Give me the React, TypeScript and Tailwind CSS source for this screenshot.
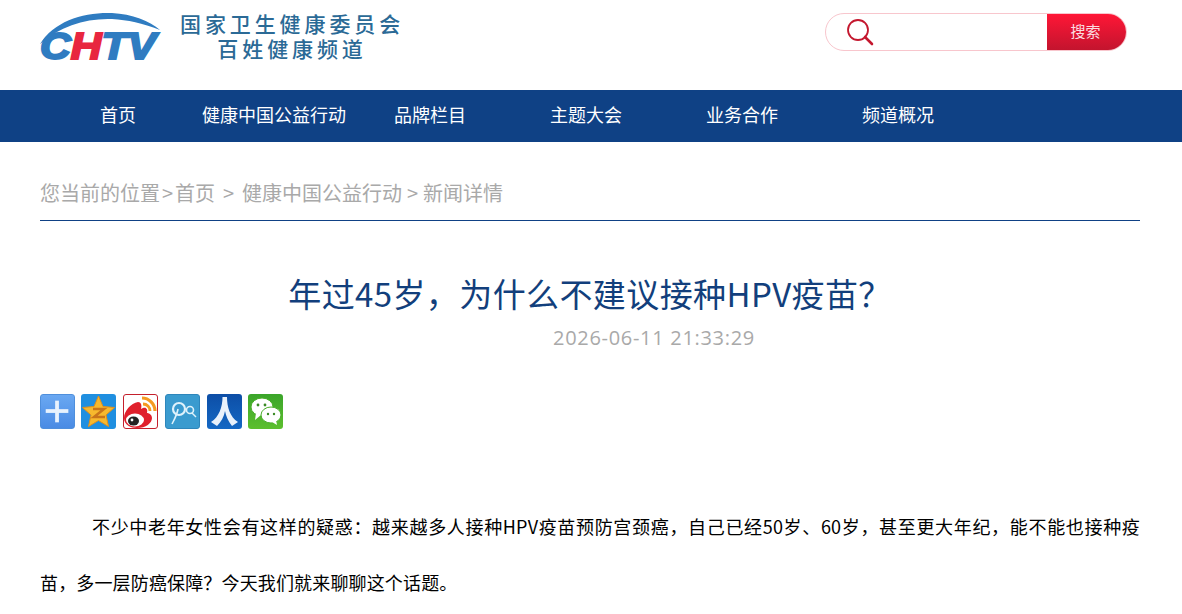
const navItems = ['首页', '健康中国公益行动', '品牌栏目', '主题大会', '业务合作', '频道概况'];

function Logo() {
  return (
    <svg width="124" height="58" viewBox="0 0 124 58" className="shrink-0">
      <path d="M0 33 C14 10 44 1 72 2 C92 3 110 10 120 19 C102 12 88 9 72 8 C46 7 20 15 0 33 Z" fill="#2f7cc1" />
      <text x="0" y="48" fontFamily="'Liberation Sans', sans-serif" fontWeight="700" fontStyle="italic" fontSize="36" textLength="116" lengthAdjust="spacingAndGlyphs" stroke="#2f7cc1" strokeWidth="2" fill="#2f7cc1">
        C<tspan fill="#e8263f" stroke="#e8263f">H</tspan>TV
      </text>
    </svg>
  );
}

function MagnifierIcon() {
  return (
    <svg width="28" height="28" viewBox="0 0 28 28" fill="none" stroke="#c4182f">
      <circle cx="12" cy="12" r="10" strokeWidth="1.8" />
      <path d="M19 19 L26 26" strokeWidth="2.6" strokeLinecap="round" />
    </svg>
  );
}

function ShareIcons() {
  return (
    <div className="mt-[41px] flex">
      <div className="mr-[6px] h-[35px] w-[35px] rounded-[3px] border border-[#4f8fdc] bg-gradient-to-b from-[#6aa8f2] to-[#4a8be4]">
        <svg viewBox="0 0 35 35" className="h-full w-full" fill="#e8f2fd">
          <rect x="5" y="15" width="24" height="4" />
          <rect x="15" y="6" width="4" height="23" />
        </svg>
      </div>
      <div className="mr-[7px] h-[35px] w-[35px] rounded-[3px] bg-[#1f8fe0]">
        <svg viewBox="0 0 35 35" className="h-full w-full">
          <path d="M17.5 2 L22 12.5 L33.5 13.5 L25 21 L27.5 32.5 L17.5 26.5 L7.5 32.5 L10 21 L1.5 13.5 L13 12.5 Z" fill="#f7b92e" stroke="#e0901c" strokeWidth="1" />
          <path d="M12 15 H23 L13 23 H24" fill="none" stroke="#c9741a" strokeWidth="2.5" />
        </svg>
      </div>
      <div className="mr-[7px] h-[35px] w-[35px] rounded-[3px] border border-[#c4202c] bg-white">
        <svg viewBox="0 0 33 33" className="h-full w-full">
          <path d="M14 7 C7 8 0 16 0 23 C0 30 7 33 13 33 C22 33 28 28 28 23 C28 19 24 18 23 18 C24 14 22 11 17 14 C18 10 17 7 14 7 Z" fill="#e0202c" />
          <ellipse cx="11" cy="25" rx="9" ry="6.5" fill="#fff" />
          <ellipse cx="9.5" cy="26" rx="5.5" ry="4.5" fill="#222" />
          <circle cx="8" cy="25" r="1.4" fill="#fff" />
          <path d="M18 3 C25 3 31 9 31 16" fill="none" stroke="#f59a22" strokeWidth="3.2" />
          <path d="M19 9 C23 9 26 12 26 16" fill="none" stroke="#f59a22" strokeWidth="2.8" />
        </svg>
      </div>
      <div className="mr-[7px] h-[35px] w-[35px] rounded-[3px] border border-[#2e86bb] bg-[#3a9bcf]">
        <svg viewBox="0 0 33 33" className="h-full w-full" fill="none" stroke="#dff2fb">
          <circle cx="13" cy="14" r="6" strokeWidth="2.2" />
          <path d="M12 14 C11 20 8 25 6 29" strokeWidth="1.6" />
          <circle cx="24" cy="15" r="3.5" strokeWidth="1.6" />
          <path d="M26 18 L30 22" strokeWidth="1.4" />
        </svg>
      </div>
      <div className="mr-[6px] h-[35px] w-[35px] rounded-[3px] bg-gradient-to-b from-[#0d4ea6] to-[#1468c4]">
        <svg viewBox="0 0 35 35" className="h-full w-full">
          <path d="M15.5 3 H20 C20 13 23 23 31 28 L25 32 C21 27 19 22 18 17 C17 23 14 28 10 32 L4 28 C12 23 15.5 13 15.5 3 Z" fill="#e8f1fb" />
        </svg>
      </div>
      <div className="h-[35px] w-[35px] rounded-[3px] bg-gradient-to-b from-[#3aa52a] to-[#5cbf2e]">
        <svg viewBox="0 0 35 35" className="h-full w-full" fill="#fff">
          <ellipse cx="14" cy="13" rx="11" ry="9" stroke="#4aae2a" />
          <path d="M8 19 L7 26 L13 21 Z" />
          <ellipse cx="23" cy="21" rx="10" ry="8" stroke="#4aae2a" />
          <path d="M28 26 L29 31 L24 28 Z" />
          <circle cx="10" cy="11" r="1.4" fill="#3a8a24" />
          <circle cx="17" cy="11" r="1.4" fill="#3a8a24" />
          <circle cx="20" cy="20" r="1.2" fill="#3a8a24" />
          <circle cx="26" cy="20" r="1.2" fill="#3a8a24" />
        </svg>
      </div>
    </div>
  );
}

export default function App() {
  return (
    <div className="h-[614px] overflow-hidden bg-white font-['Noto_Sans_CJK_SC','Liberation_Sans',sans-serif]">
      <header className="flex h-[90px] justify-between pl-[40px] pr-[55px]">
        <div className="flex items-start pt-[11px]">
          <Logo />
          <div className="ml-[16px] text-center text-[21px] leading-[25px] font-medium tracking-[3.9px] text-[#2b6a96]">
            <div>国家卫生健康委员会</div>
            <div>百姓健康频道</div>
          </div>
        </div>
        <div className="mt-[13px] flex h-[38px] w-[302px] overflow-hidden rounded-[19px] border border-[#f8c6cd]">
          <div className="flex flex-1 items-center pl-[20px]">
            <MagnifierIcon />
          </div>
          <button className="w-[79px] bg-gradient-to-b from-[#ff1636] to-[#c3142e] pr-[2px] pb-[2px] text-[15px] text-[#fbdde1]">搜索</button>
        </div>
      </header>

      <nav className="flex h-[52px] items-center bg-[#0f4185] pb-[3px] pl-[40px]">
        {navItems.map((item) => (
          <a key={item} className="w-[156px] text-center text-[18px] text-white">
            {item}
          </a>
        ))}
      </nav>

      <main className="pr-[42px] pl-[40px]">
        <div className="flex h-[79px] items-center border-b border-[#0f4185] pt-[23px] text-[20px] text-[#a9a9a9]">
          您当前的位置
          <span className="w-[15px] text-center">&gt;</span>
          首页
          <span className="w-[27px] text-center">&gt;</span>
          健康中国公益行动
          <span className="w-[21px] text-center">&gt;</span>
          新闻详情
        </div>
        <h1 className="mt-[46px] text-center text-[33px] leading-[52px] font-normal tracking-[0.4px] text-[#123f7c]">
          年过45岁，为什么不建议接种HPV疫苗？
        </h1>
        <div className="mt-[4px] pl-[513px] font-['Open_Sans','Liberation_Sans',sans-serif] text-[20px] leading-[30px] tracking-[0.7px] text-[#a9a9a9]">2026-06-11 21:33:29</div>
        <ShareIcons />
        <p className="mt-[69px] text-justify indent-[52px] text-[18px] leading-[56px] tracking-[0.15px] text-black">
          不少中老年女性会有这样的疑惑：越来越多人接种HPV疫苗预防宫颈癌，自己已经50岁、60岁，甚至更大年纪，能不能也接种疫苗，多一层防癌保障？今天我们就来聊聊这个话题。
        </p>
      </main>
    </div>
  );
}
